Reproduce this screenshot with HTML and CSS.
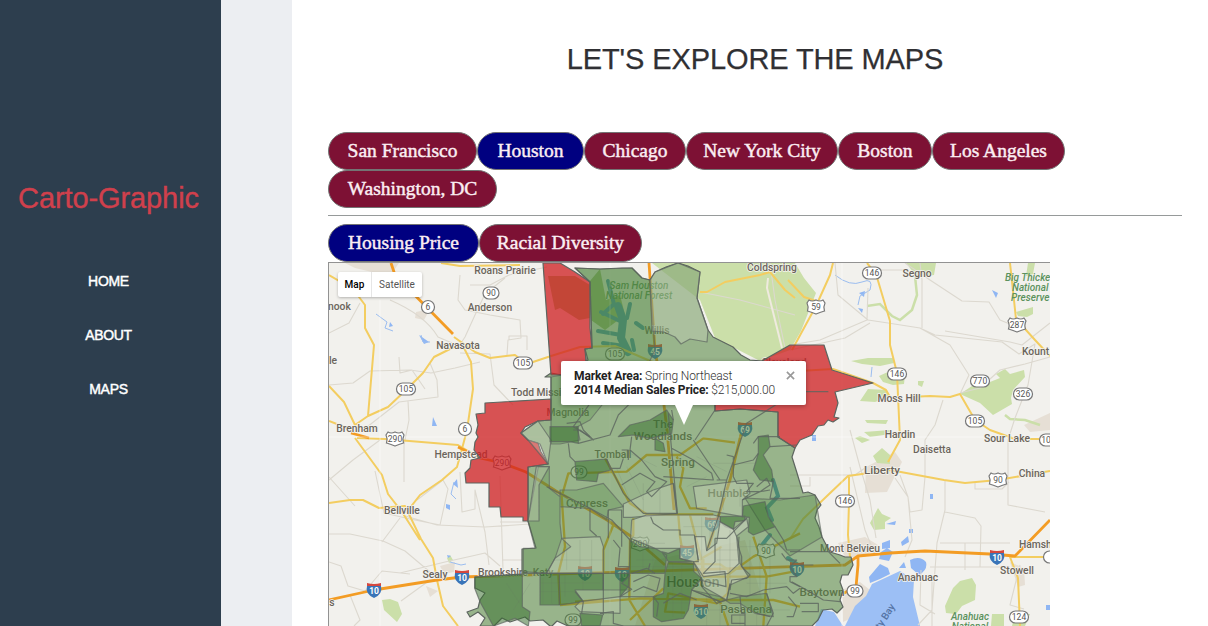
FILE: index.html
```html
<!DOCTYPE html>
<html lang="en">
<head>
<meta charset="utf-8">
<title>Carto-Graphic</title>
<link rel="stylesheet" href="styles.css">
</head>
<body>
<div class="layout">
<aside class="sidebar">
  <h1 class="brand">Carto-Graphic</h1>
  <nav class="nav"><a>HOME</a><a>ABOUT</a><a>MAPS</a></nav>
</aside>
<main class="content">
  <h2 class="title">LET'S EXPLORE THE MAPS</h2>
  <div class="tabs cities">
    <button class="w149">San Francisco</button><button class="w107 active">Houston</button><button class="w102">Chicago</button><button class="w152">New York City</button><button class="w94">Boston</button><button class="w133">Los Angeles</button><button class="w169">Washington, DC</button>
  </div>
  <hr class="rule">
  <div class="tabs"><button class="w151 active">Housing Price</button><button class="w163">Racial Diversity</button></div>
  <div class="map">
<svg class="map-art" viewBox="329 263 721 363" width="721" height="363">
<defs>
<g id="p1"><circle r="6.5" class="sh"/></g>
<g id="p2"><rect x="-8" y="-6" width="16" height="12" rx="6" class="sh"/></g>
<g id="p3"><rect x="-9.5" y="-6" width="19" height="12" rx="6" class="sh"/></g>
<g id="us"><path d="M-7-7Q-4-5 0-7Q4-5 7-7L9-4Q7 0 8.500 4Q5 5 0 7Q-5 5-8.500 4Q-7 0-9-4Z" class="sh"/></g>
<g id="in"><path d="M-7-4H7Q9 4 0 8Q-9 4-7-4Z" fill="#3974b8"/><path d="M-7-7Q0-5 7-7V-4H-7Z" fill="#d5483f"/></g>
</defs>
<rect x="329" y="263" width="721" height="363" fill="#f2f1ed"/>
<!-- urban areas -->
<g fill="#e6dfd5"><path d="M345 263H399L390 276L372 272L355 268ZM416 312L430 309L424 320L415 318ZM866 467L895 452L902 462L887 492L865 493ZM838 543L865 537L878 545L865 557H845ZM842 590L860 582L870 590L858 615L843 622ZM1010 562L1024 568L1025 585L1018 587ZM1024 425L1050 413V430L1030 432ZM440 566L455 562L454 572L444 574ZM426 586L438 591L430 597ZM655 560L745 540L770 626H635Z"/></g>
<!-- parks -->
<g fill="#cbdfa9"><path d="M652 263H795L804 278L816 293L801 331L790 350L760 361L715 338L700 300Z"/><path d="M906 263H936L934 275L917 277ZM1028 263H1035L1033 274L1026 276ZM851 361L868 358H893L894 363L880 366L862 364ZM879 376L890 371L905 374L904 384L893 385L883 382ZM860 401L868 389L887 390L890 397L875 402ZM918 381H924L922 387L918 385ZM960 394L972 386L985 384L1000 378L996 374L1005 369L1010 374L1024 370L1025 377L1013 390L1011 398L1012 404L1000 411L993 415L980 403ZM1016 312L1033 307V314L1027 317L1018 316ZM865 420H888L886 424L867 423ZM864 432L890 430V434L870 437ZM873 456L882 448L890 455V464L877 463ZM870 523L878 508L882 514L891 518L885 522L885 529L874 530ZM945 606L953 588L960 581L972 578L976 585L975 600L962 606L956 614L946 613ZM992 614H1004V626H991ZM1015 614H1030L1025 626H1012ZM382 600L390 599L398 602L402 614L397 622L384 610ZM447 558L450 555L453 560L449 563ZM855 438L860 436L870 440L862 443Z"/><path d="M867 306L880 304L892 316L900 320L912 310L917 295L915 276M1005 415L1010 419L1025 420L1040 425" fill="none" stroke="#cbdfa9" stroke-width="2.500"/></g>
<g fill="#75a43c" fill-opacity=".65"><path d="M590 281L600 269L606 300L620 295L625 315L605 330L591 320ZM548 276H575L590 285V318L579 320L560 308L555 310Z"/></g>
<!-- water -->
<g fill="#8fb6f3"><path d="M845 626L855 606L866 596L872 584L885 578L900 571L914 580L913 597L920 626ZM821 609L834 612L843 626H815Z" fill="#9cbff5"/><path d="M910 560Q920 555 926 562Q928 570 919 575L911 568ZM869 577L880 564L888 568L890 574L880 579L870 583ZM882 543L890 540L890 548L882 549ZM881 552L887 548L893 552L889 561L879 559ZM901 542L908 536L909 542L902 546ZM899 568L904 562L906 568ZM859 293L865 291L864 297ZM858 308L863 309L862 313ZM992 290L998 293L996 298ZM886 524L896 521L895 525ZM909 529H913V533H909ZM930 494H933V499H930ZM812 435H816V441H812ZM1046 605H1050V610H1046ZM390 322L393 326L389 327ZM419 335L429 342L424 344ZM433 417L437 426H432ZM453 484L457 479L458 488ZM446 504L450 505V510L446 508ZM447 555L451 556L448 558Z"/></g>
<path fill="none" stroke="#4b96bd" stroke-width="8" stroke-linejoin="round" stroke-linecap="round" d="M618 306L623 320L621 338L628 352"/>
<path fill="none" stroke="#4b96bd" stroke-width="4" stroke-linecap="round" d="M608 281L614 304L603 314M622 322L601 312M621 335L598 331M624 346L603 343M632 340L634 350M636 323L643 328M627 318L630 304M773 480L778 496L767 508L772 520M770 535L762 545M788 558L798 565"/>
<path class="water-line" d="M835 275Q850 287 862 282T870 290L860 296L858 305M454 482L451 494L456 499M450 562L461 565L466 564M872 367L871 377M376 314L387 322L385 328L393 331M421 335L423 342L430 342"/>
<!-- local roads -->
<g class="minor"><path d="M329 385L353 383L370 371L410 370L431 373L455 368L480 362M329 333L349 323L360 303M390 300Q425 315 438 337L452 343M460 353L490 354L494 385L513 405M505 278L485 294L475 315L465 337L461 343M470 285L490 285L509 275L547 267M460 275L458 300L465 310L490 315L520 320L521 338L508 340L507 355M509 340V336H527V350M408 401L409 420L404 445V482M367 427L399 402L438 397L437 380L430 363M329 480L353 460L380 440M355 506L329 477M399 357L400 373L412 370L425 389M329 534H350L383 541L405 551L430 572M405 516L437 525L485 527L530 524M375 471L384 513L410 519L440 525L448 489L443 480L417 500M460 472L462 512L475 509V490L485 532L489 565M500 476L503 570M500 522H528M502 560L522 560M329 562L341 566L348 586L365 591L382 571L410 574M382 542L400 518M350 595L360 620L354 626M400 573L445 562L472 556L485 553L500 566M401 601L430 580L470 576"/>
<path d="M835 263L838 295L868 320L888 323L920 328L950 345L969 375L960 394M920 328L935 335L1002 342L1019 354L1035 344L1028 385L1015 418L1008 440V505L1045 512M945 331L1010 342L1022 345L1050 323M905 263L930 280L962 301L989 302L1000 320L1017 327M790 345L820 340L867 320L868 288M870 323L845 338L790 350M920 263L922 280V328M878 270H906M770 263L775 300L785 348M700 292L740 300L795 315M960 393L980 388L1000 370L1025 364L1050 357M943 400L935 425L925 440V477L922 510L910 512L908 497L900 475M945 481V510L937 543L932 610L918 625M940 543H1010M945 512L975 518L981 526L980 567M965 543V570M930 567H1010M850 430L860 467L870 500L876 538M790 475L855 475L865 468M790 486H810V477M975 482V489H1002L1009 482M1020 565L1010 605L1024 609M895 478L908 497L912 540L905 557M921 570L920 605L935 614M932 575V626M850 467L865 530L875 555"/></g>
<path d="M768 278L767 288L782 348" fill="none" stroke="#efeadf" stroke-width="2"/>
<!-- highways -->
<g class="road"><path d="M329 275L353 289L365 305L365 328L374 345L368 416M329 386L344 402L355 425L368 416L388 407L406 390L423 373L434 357L458 345M462 344L471 362L473 389L467 430L463 445L457 467L442 480L420 495L406 513M454 337L475 352L490 358L515 355L527 364L551 356L580 347L615 346L655 363M441 263L460 266L520 265M329 503L350 500L363 500L379 508L405 506L421 539L433 558L437 580L443 606L458 626M329 421L352 430M357 438L385 439L458 445L480 458M355 438L382 475L388 494L402 512L420 540"/><path d="M833 263L830 275L816 306L792 350M788 280L804 297L816 301M867 263L876 274L890 321L890 345L897 373L900 440L888 462M799 371L833 369L873 383L886 390L890 397M910 397L930 396L950 397L960 394L975 420L990 430L1015 439H1050M1010 263L1016 319L1035 340L1050 356M790 539L803 519L827 496L848 476L890 470L944 480L965 483L998 480L1050 471M849 477V503L848 535L850 557M1050 557H1010L1018 578L1020 626M700 292H707L725 282L760 275L770 272L785 290L795 298"/></g>
<g class="freeway"><path d="M391 263L395 275L453 334M351 433L369 438M329 600L374 590L437 580L462 577L845 565L858 556L890 553L925 551L990 554L1015 556L1050 520M458 447L480 458L502 463L526 472L556 491L607 520L635 539L665 565M649 263L655 350L663 397L667 430L674 510M858 557V565L856 587L840 595M742 430L730 480L708 548"/></g>
<g class="city-road" transform="translate(540 430) scale(.333333)"><path d="M60 525L55 430L75 350L65 200L85 130L260 125L320 75L420 75L490 25L585 38M195 85L270 220L320 253H520M280 265V315L270 330L268 510L315 588M410 80L430 115L420 170L450 235H500M415 255L420 320L430 380M450 255L485 390L490 470M490 380V470M385 400L540 403L565 420L563 490L530 520L385 490L375 545L435 548M485 440L680 440L760 425M460 400L545 350M563 435L640 380L700 350L780 310M640 320L660 380L680 440L670 588M60 525L300 505L560 510H700L780 530M190 430V360L220 285M540 515L565 588M270 570L370 475M105 515L190 510"/></g>
<path class="white-grid" d="M610 263V626M842 263V626M380 300V626M329 437H1050"/>
<!-- place names -->
<g class="place">
<text x="505" y="274">Roans Prairie</text><text x="490" y="311">Anderson</text><text x="458" y="349">Navasota</text><text x="542" y="396">Todd Mission</text><text x="357" y="432">Brenham</text><text class="start" x="328" y="310">nook</text><text class="start" x="329" y="364">le</text><text x="568" y="416">Magnolia</text><text x="657" y="334">Willis</text><text x="772" y="271">Coldspring</text><text x="784" y="366">Cleveland</text><text x="917" y="277">Segno</text><text class="start" x="1022" y="355">Kount</text><text x="899" y="402">Moss Hill</text><text x="900" y="438">Hardin</text><text x="1007" y="442">Sour Lake</text><text x="932" y="453">Daisetta</text><text class="mid" x="882" y="474">Liberty</text><text x="1032" y="477">China</text><text x="850" y="552">Mont Belvieu</text><text class="start" x="1019" y="548">Hamsh</text><text x="1017" y="574">Stowell</text><text x="918" y="581">Anahuac</text><text class="mid" x="822" y="596">Baytown</text><text x="461" y="458">Hempstead</text><text x="402" y="514">Bellville</text><text x="435" y="578">Sealy</text><text x="503" y="576">Brookshire</text><text x="543" y="576">Katy</text><text x="332" y="606">s</text><text class="mid" x="663" y="428">The</text><text class="mid" x="663" y="440">Woodlands</text><text x="613" y="458">Tomball</text><text class="mid" x="678" y="466">Spring</text><text class="mid" x="587" y="507">Cypress</text><text class="mid" x="728" y="497">Humble</text><text class="city" x="693" y="587">Houston</text><text class="mid" x="746" y="613">Pasadena</text>
<g class="forest"><text x="639" y="289">Sam Houston</text><text x="639" y="299">National Forest</text><text class="start" x="1005" y="281">Big Thicke</text><text class="start" x="1012" y="291">National</text><text class="start" x="1011" y="301">Preserve</text><text x="970" y="620">Anahuac</text><text x="970" y="630">National</text></g>
<text class="bay" transform="translate(888 618) rotate(-57)">ty Bay</text>
</g>
<!-- route markers -->
<g class="num">
<g transform="translate(491 293)"><use href="#p2"/><text y="3">90</text></g><g transform="translate(428 307)"><use href="#p1"/><text y="3">6</text></g><g transform="translate(523 363)"><use href="#p3"/><text y="3">105</text></g><g transform="translate(406 389)"><use href="#p3"/><text y="3">105</text></g><g transform="translate(465 429)"><use href="#p1"/><text y="3">6</text></g><g transform="translate(615 354)"><use href="#p3"/><text y="3">105</text></g><g transform="translate(872 273)"><use href="#p3"/><text y="3">146</text></g><g transform="translate(897 374)"><use href="#p3"/><text y="3">146</text></g><g transform="translate(980 381)"><use href="#p3"/><text y="3">770</text></g><g transform="translate(1023 394)"><use href="#p3"/><text y="3">326</text></g><g transform="translate(975 421)"><use href="#p3"/><text y="3">105</text></g><g transform="translate(845 501)"><use href="#p3"/><text y="3">146</text></g><g transform="translate(855 591)"><use href="#p2"/><text y="3">99</text></g><g transform="translate(579 472)"><use href="#p2"/><text y="3">99</text></g><g transform="translate(573 620)"><use href="#p2"/><text y="3">99</text></g><g transform="translate(1019 617)"><use href="#p3"/><text y="3">124</text></g><g transform="translate(1049 440)"><use href="#p3"/><text x="-3" y="3">10</text></g><g transform="translate(1053 557)"><use href="#p3"/></g>
<g transform="translate(395 439)"><use href="#us"/><text y="3">290</text></g><g transform="translate(502 463)"><use href="#us"/><text y="3">290</text></g><g transform="translate(816 307)"><use href="#us"/><text y="3">59</text></g><g transform="translate(1017 325)"><use href="#us"/><text y="3">287</text></g><g transform="translate(998 480)"><use href="#us"/><text y="3">90</text></g><g transform="translate(640 544)"><use href="#us"/><text y="3">290</text></g><g transform="translate(766 551)"><use href="#us"/><text y="3">90</text></g>
<g class="inter"><g transform="translate(374 590)"><use href="#in"/><text y="4">10</text></g><g transform="translate(462 577)"><use href="#in"/><text y="4">10</text></g><g transform="translate(655 351)"><use href="#in"/><text y="4">45</text></g><g transform="translate(745 429)"><use href="#in"/><text y="4">69</text></g><g transform="translate(712 524)"><use href="#in"/><text y="4">69</text></g><g transform="translate(687 552)"><use href="#in"/><text y="4">45</text></g><g transform="translate(585 573)"><use href="#in"/><text y="4">10</text></g><g transform="translate(622 574)"><use href="#in"/><text y="4">10</text></g><g transform="translate(701 611)"><use href="#in"/><text y="4">610</text></g><g transform="translate(997 557)"><use href="#in"/><text y="4">10</text></g><g transform="translate(797 569)"><use href="#in"/><text y="4">10</text></g></g>
</g>
<!-- market areas -->
<path class="area base" d="M575 268L600 269L622 268L632 268L642 278L650 280L655 272L666 267L678 263L688 266L700 272L697 298L708 330L713 337L725 343L733 347L741 355L750 360L762 361L715 390V411L740 409L778 412V437L795 448L792 457L797 473L803 493L808 492L815 495L821 505L817 510L815 518L819 527L822 537L830 552L840 555L845 557L851 557L853 565L848 575L842 575L840 582L843 590L840 600L843 607L837 613L832 609L823 610L818 620L812 626H568L557 621L552 626H550L543 620L530 621L525 617L510 622L502 618L494 626H480L485 618L478 612L470 617L467 612L478 608L480 600L485 593L475 588V577L522 574V549L536 548L528 521V467L548 464L540 444L528 440L521 433L538 421L551 420V377L545 377L551 373L562 375L588 360L585 349L592 348L590 282Z"/>
<path class="area red" d="M543 263H560L575 272L590 282L590 328L592 348L585 349L586 361L562 375H551Z"/>
<path class="area red" d="M485 403L551 399V420L538 421L525 427L521 433L528 440L538 443L541 452L546 460L548 464L528 467V521H523V517H501L500 507H489V483H466L465 473L470 468L471 460L480 458L474 450L475 442L478 437L476 433L478 425L476 414L485 413Z"/>
<path class="area red" d="M762 361L790 345H824L832 370L873 383L835 392L838 403L834 417L839 418L833 422L828 420L824 425L818 426L812 435L800 440L795 448L778 437V412L740 409L715 411V405Z"/>
<path class="area mid-green" d="M575 268L600 269L632 268L642 278L650 280L655 350L645 371H588L585 349L592 348L590 282ZM551 377L562 375L602 405L590 420L577 427L580 440L560 444H551ZM745 498L780 500L815 495L822 537L790 556L765 530Z"/>
<path class="area pale" d="M650 280L655 272L678 263L700 272L697 298L708 330L707 342L690 339L681 344L675 337L664 332L652 331ZM528 440L548 464L551 440L538 421L521 433Z"/>
<g transform="translate(540 430) scale(.333333)">
<path class="area mid-green local" d="M-5 110H28V175L60 200V280L65 325L45 385L20 430L-50 425V355H-15L-36 273ZM60 180H110L190 160L250 230L205 240L200 270L150 235L60 230ZM190 430H268V480H190ZM455 480L540 515L560 510L600 500L680 490L700 560L645 550L600 520H570L540 500Z"/>
<path class="area dark local" d="M270 330L300 350L345 355L380 375L375 430H268L265 470L240 500L340 500L370 490L375 430L385 395L460 400L462 425L485 445L455 480L445 540L430 565L365 575L340 560L340 500H240V430H268ZM0 430H190V480H105L130 515L60 525H0ZM105 95L200 87L212 120L175 130L170 155L110 150ZM30-10H115V40L90 35H30ZM345 25L370 40L375 65L345 60ZM655 20L685 15L690 50L670 75L695 120L700 155L660 150L640 120L655 70ZM610 228L675 215L685 260L705 290L640 315L625 305L628 262L607 260ZM540 260L615 258V272L585 275L580 298L555 290L540 275ZM365 365L385 370L420 355V385L455 395H385ZM120 550L188 555L180 588H125ZM235 20L270-15L330-30L380-60L400-30L395 10L330 25L280 15ZM-196 441L-53 433V530L-30 545L-35 588L-75 565L-140 588L-180 515L-196 475Z"/>
<path class="area pale local" d="M65 325L180 320L190 350V430H20L45 385L92 350ZM120 515L240 500V550L120 545L105 530ZM-11 110H28L-3 165V273H-36ZM250 222L340 180L400 160L412 250L275 262L250 262ZM460 170L620 150L630 190L607 210V260L470 235Z"/>
<path class="area paler local" d="M275 270L320 255L520 255L540 260L540 275L580 298L620 265L625 290L590 318L597 350L600 400L625 440L570 465L560 510L490 470L485 445L460 395L420 385V355L345 355L272 325Z"/>
<path class="area paler local" d="M465 320H495L500 362L530 340L540 275L580 298L590 320L597 400L565 430L490 440L460 395H475Z"/>
<g class="bounds"><path d="M80-20L120-25L130 0L160 30L120 0L100 0M85 40L90 80L105 95M20 170L150 235L215 270L270 330M115 40L210 15L235-45L270-80M200 87L250 190L310 250H412L385-50M250 85L240 115L210 115M245 60H265V90M245 165L300 130L345 155L320 185L335 200L380 155L345 140L305 90L270 60L275 20M395 55L460 90L515 130L520 150L450 145L370 140M460 30L540 150M465 30L525-60M400 160L410 250M560 75L580 80L580 140L590 160L640 160L620 185H660L690 165L680 145L650 170M580 105L640 90L655 70M607 210L660 185L690 180M530 150L560 150L620-20L730-90M560 150L535 260L500 362M640 40L655 20L720 20M690 50L770 45M700 155L690 205H780M705 290L730 330L740 360H780M332 260L340 280L370 300H420V315H463L475 390M525 325L560 325L620 265M525 325V395L490 430L555 425L558 470L480 450M597 320L595 350L605 380L605 410L630 435L620 445L575 450L570 480M150 235V300L170 318M205 240V325M205 240H245V350M220 330L240 355L235 410H270M-50 430H190M58 430V525M105 485L130 515L125 550M190 430V555M180 550L220 545V580L250 588M270 435L245 460L275 478L240 500M275 430L320 415L345 430M280 455L325 435L360 445L350 485L310 470L280 485M330 400L325 420M340 500L355 520L350 560M370 520L420 490L470 510M455 480L540 515M485 470L530 520L560 510L570 460M570 490L620 500L670 480L740 470L760 490L780 475M600 500L605 550H615V588M575 555H615V580H575ZM650 550L690 560M680 490L700 550L680 588M745 500L770 530L760 560L740 560M725 370L740 390L770 390L750 410L770 440H750V455L780 470"/>
<path d="M750-115L865-115M780 405H820M755 455L800 480L850 510L900 515M780 520H835V545H785M900 400L865 365H750M150 20L100-10L150-80L145-120M395-60L400-30"/></g>
<path class="urban-grid" d="M10 445V520M35 440V520M0 460H180M0 485H105M75 435V500M130 435V480M230 115L270 210M260 110L310 210M310 160V250M360 180V250M440 170L500 140M250 60L350 110M470 80L560 125M520 100H650M550 175V240M600 170V230M290 340H375M290 390H375M310 355V430M340 355V430M270 410H460M400 400V560M425 400V560M375 470H455M375 520H450M485 260V390M510 260V345M430 290H520M540 350V430M570 300V500M525 360H600M530 390H600M630 330V500M660 330V490M690 350V490M600 350H740M600 410H740M620 460H740M500 500V588M540 515V588M600 550V588M650 550V588M480 540H750M80 350V420M120 330V420M155 330V420M40 390H190M-30 460L-80 540M-100 460L-60 520"/>
</g>
</svg>
    <div class="map-type"><span class="on">Map</span><span>Satellite</span></div>
    <div class="popup"><p><b>Market Area:</b> Spring Northeast</p><p><b>2014 Median Sales Price:</b> $215,000.00</p><svg class="close" viewBox="0 0 10 10"><path d="M1 1L9 9M9 1L1 9"/></svg></div>
  </div>
</main>
</div>
</body>
</html>
```
FILE: styles.css
```css
*{box-sizing:border-box}
body{margin:0;background:#eceef2;font-family:"Liberation Sans",Arial,sans-serif;overflow:hidden}
.layout{display:flex;height:626px;gap:71px}
.sidebar{width:221px;flex:none;background:#2d3e4e;padding:181px 4px 0 0;text-align:center}
.brand{margin:0;font-size:29px;line-height:34px;font-weight:400;color:#d0404c;white-space:nowrap;letter-spacing:-.1px;-webkit-text-stroke:.4px #d0404c}
.nav{display:flex;flex-direction:column;gap:34px;margin-top:56px;color:#fff;font-size:14px;letter-spacing:-.3px;line-height:20px;-webkit-text-stroke:.45px #fff}
.content{flex:1;min-width:0;background:#fff;padding:40px 26px 0 36px}
.title{margin:0;text-align:center;color:#303033;font-weight:400;font-size:29px;letter-spacing:-.1px;line-height:38px;white-space:nowrap;-webkit-text-stroke:.25px #303033}
.tabs{display:flex;flex-wrap:wrap;width:740px}
.cities{margin-top:54px}
.tabs button{height:38px;padding:0;border:1px solid #747474;border-radius:19px;background:#7d1134;color:#fbeef2;font-family:Georgia,"Liberation Serif",serif;font-size:19.5px;text-align:center;white-space:nowrap;-webkit-text-stroke:.45px #fbeef2}
.tabs .active{background:#000080}
.w149{width:149px}.w107{width:107px}.w102{width:102px}.w152{width:152px}.w94{width:94px}.w133{width:133px}.w169{width:169px}.w151{width:151px}.w163{width:163px}
.rule{border:0;border-top:1px solid #969a9a;margin:7px 0 8px}
.map{position:relative;width:722px;height:364px;border:1px solid #929292;border-width:1px 0 0 1px;font-family:Roboto,sans-serif}
.map-art{display:block}
.sh{fill:#fff;stroke:#777;stroke-width:1.2}
.num{font-size:8.5px;fill:#555;text-anchor:middle}
.inter{fill:#fff;font-weight:700}
.place{font-size:10.3px;font-weight:500;fill:#6b645b;text-anchor:middle;paint-order:stroke;stroke:#f5f4f0;stroke-width:1.5px;stroke-linejoin:round}
.place .start{text-anchor:start}
.place .mid{font-size:11.7px}
.place .city{font-size:14px;fill:#48443f}
.forest{fill:#5b925d;font-style:italic;font-size:10px;stroke:none}
.place .bay{fill:#5574a5;stroke:none;font-size:10px}
.minor{fill:none;stroke:#dcd8cf;stroke-width:1.1;stroke-linejoin:round}
.road{fill:none;stroke:#f3cd60;stroke-width:2;stroke-linejoin:round}
.freeway{fill:none;stroke:#f39c24;stroke-width:2.8;stroke-linejoin:round}
.city-road{fill:none;stroke:#efae2c;stroke-width:7;stroke-linejoin:round}
.water-line{fill:none;stroke:#9bbdf0;stroke-width:1}
.white-grid{fill:none;stroke:#fff;stroke-opacity:.45}
.area{stroke:#5d655f;stroke-width:1.2;stroke-linejoin:round}
.local{stroke-width:3.6}
.base{fill:#4e823a;fill-opacity:.55}
.red{fill:#cf1f22;fill-opacity:.76}
.mid-green{fill:#49823a;fill-opacity:.25;stroke-opacity:.65}
.dark{fill:#316b27;fill-opacity:.48;stroke-opacity:.7}
.pale{fill:#dde0d0;fill-opacity:.28;stroke-opacity:.7}
.paler{fill:#e0e2d6;fill-opacity:.38;stroke-opacity:.7}
.bounds{fill:none;stroke:#5d655f;stroke-width:3.6;stroke-opacity:.8;stroke-linejoin:round}
.urban-grid{fill:none;stroke:#68766a;stroke-width:2;stroke-opacity:.22}
.map-type{position:absolute;left:9px;top:9px;display:flex;width:84px;height:25px;background:#fff;border-radius:2px;box-shadow:0 1px 3px #0004;font-size:10px;line-height:25px;color:#555;text-align:center}
.map-type span{flex:1}
.map-type .on{flex:none;width:34px;border-right:1px solid #e6e6e6;color:#000;font-weight:500}
.popup{position:absolute;left:232px;top:98px;width:245px;height:44px;padding:8px 13px;background:#fff;border-radius:2px;box-shadow:0 1px 5px #0005;color:#333;font-size:12px;letter-spacing:-.13px;line-height:14px;white-space:nowrap}
.popup p{margin:0;font-weight:300}
.popup b{color:#222;font-weight:700}
.popup:after{content:"";position:absolute;left:114px;top:44px;border:9px solid transparent;border-top:20px solid #fff;border-bottom:0}
.close{position:absolute;left:225px;top:10px;width:9px;height:9px;stroke:#999;stroke-width:1.8}
```
